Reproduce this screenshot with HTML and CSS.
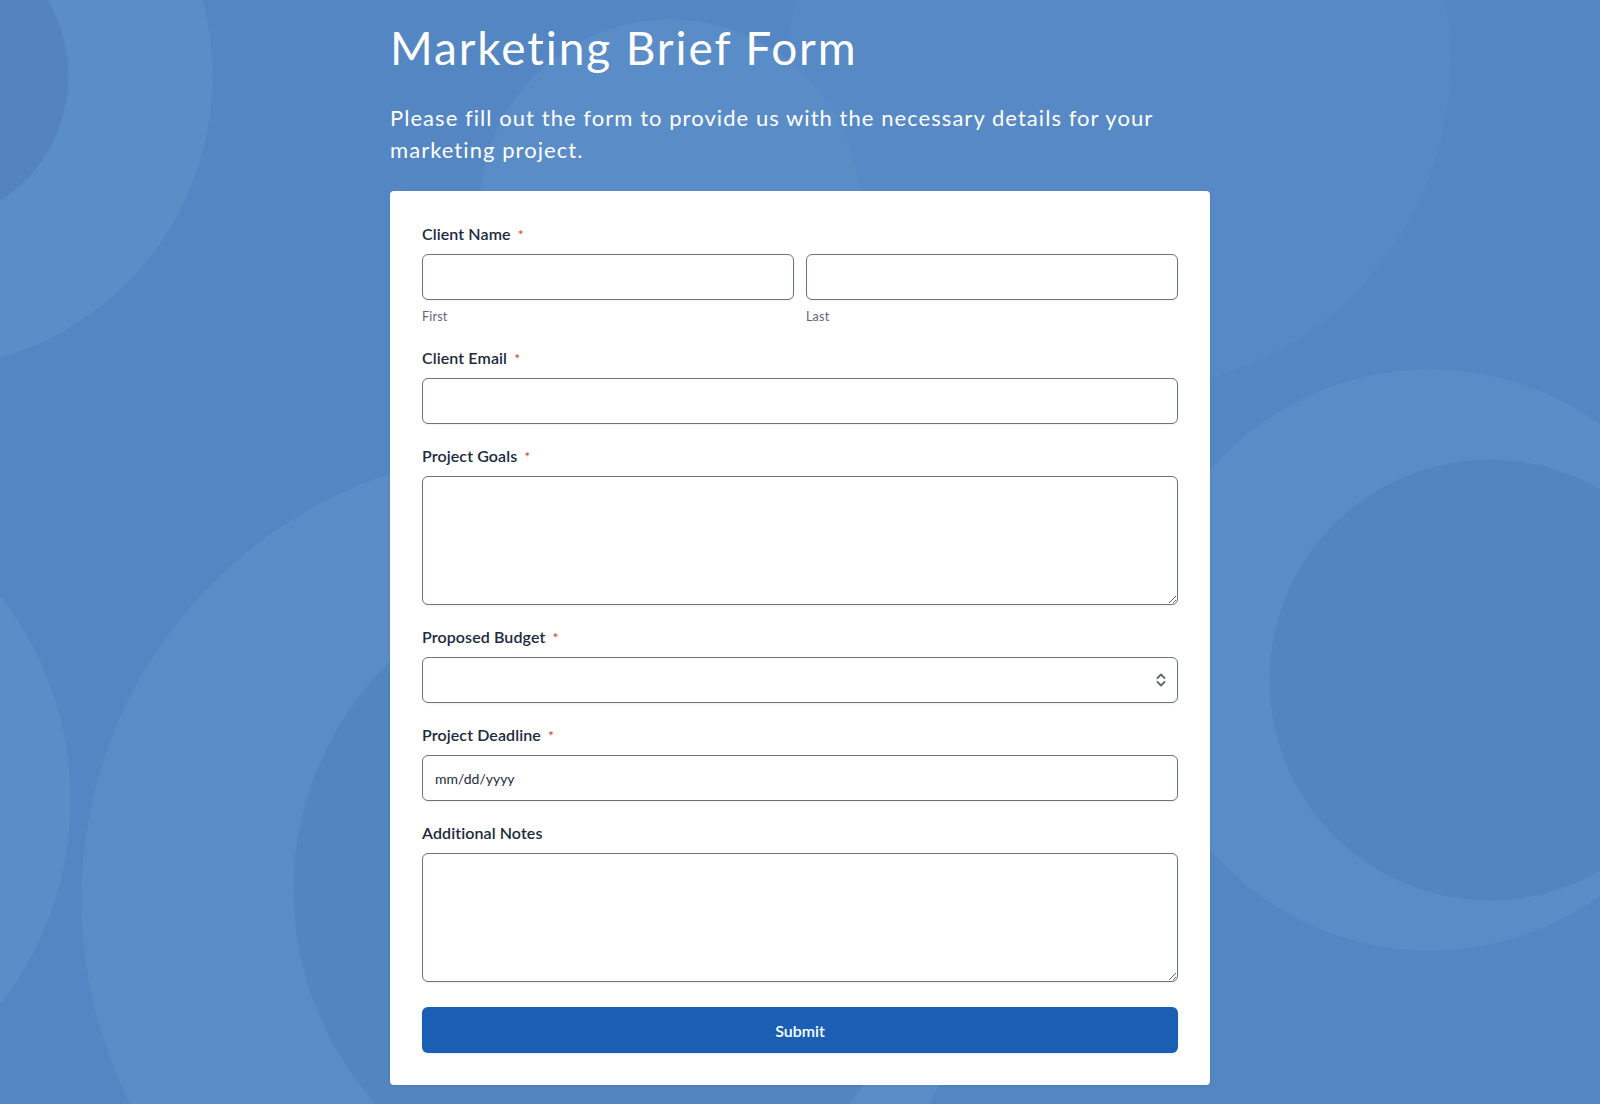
FILE: index.html
```html
<!DOCTYPE html>
<html lang="en">
<head>
<meta charset="utf-8">
<title>Marketing Brief Form</title>
<link rel="stylesheet" href="styles.css">
</head>
<body>
<main class="page">
  <h1 class="title">Marketing Brief Form</h1>
  <p class="intro">Please fill out the form to provide us with the necessary details for your marketing project.</p>
  <form class="card">
    <div class="field">
      <label class="label">Client Name <span class="req">*</span></label>
      <div class="name-row">
        <div class="name-col">
          <input class="input" type="text">
          <span class="sublabel">First</span>
        </div>
        <div class="name-col">
          <input class="input" type="text">
          <span class="sublabel">Last</span>
        </div>
      </div>
    </div>
    <div class="field">
      <label class="label">Client Email <span class="req">*</span></label>
      <input class="input" type="email">
    </div>
    <div class="field">
      <label class="label">Project Goals <span class="req">*</span></label>
      <textarea class="input textarea"></textarea>
    </div>
    <div class="field">
      <label class="label">Proposed Budget <span class="req">*</span></label>
      <div class="select-wrap">
        <select class="input select"><option></option></select>
        <svg class="chev" width="12" height="16" viewBox="0 0 12 16" fill="none" stroke="#5f6673" stroke-width="1.8" stroke-linecap="round" stroke-linejoin="round"><path d="M2.5 6 L6 2.5 L9.5 6"/><path d="M2.5 10 L6 13.5 L9.5 10"/></svg>
      </div>
    </div>
    <div class="field">
      <label class="label">Project Deadline <span class="req">*</span></label>
      <input class="input date" type="text" placeholder="mm/dd/yyyy">
    </div>
    <div class="field">
      <label class="label">Additional Notes</label>
      <textarea class="input textarea"></textarea>
    </div>
    <button class="submit" type="button">Submit</button>
  </form>
</main>
</body>
</html>
```

FILE: styles.css
```css
html, body {
  margin: 0;
  padding: 0;
}
body {
  min-height: 1104px;
  font-family: Lato, "Noto Sans", sans-serif;
  font-variant-ligatures: none;
  background-color: #5386c2;
  background-image:
    radial-gradient(circle at -80px 76px, #5384c0 0 148px, transparent 149px),
    radial-gradient(circle at -80px 76px, #5b8ec9 0 292px, transparent 293px),
    radial-gradient(circle at 612px 890px, #5385c1 0 318px, transparent 319px),
    radial-gradient(circle at 530px 900px, #5a8dc8 0 448px, transparent 449px),
    radial-gradient(circle at -260px 800px, #5b8ec9 0 330px, transparent 331px),
    radial-gradient(circle at 1490px 680px, #5385c1 0 220px, transparent 221px),
    radial-gradient(circle at 1430px 660px, #5a8dc8 0 290px, transparent 291px),
    radial-gradient(circle at 670px 210px, #5a8dc8 0 190px, transparent 191px),
    radial-gradient(circle at 1120px 60px, #5689c5 0 330px, transparent 331px);
  background-repeat: no-repeat;
  color: #1c2a3e;
}
.page {
  width: 820px;
  margin: 0 auto;
  padding-top: 20px;
  padding-bottom: 18px;
}
.title {
  margin: 0;
  font-size: 46px;
  line-height: 56px;
  font-weight: 400;
  letter-spacing: 1.9px;
  color: #ffffff;
}
.intro {
  margin: 26px 0 0;
  font-size: 22px;
  line-height: 32px;
  font-weight: 400;
  letter-spacing: 1.05px;
  color: #ffffff;
}
.card {
  margin-top: 25px;
  background: #ffffff;
  border-radius: 4px;
  padding: 31px 32px 32px;
  box-shadow: 0 1px 3px rgba(0,0,0,0.08);
}
.field {
  display: flex;
  flex-direction: column;
  margin-bottom: 20px;
}
.label {
  display: block;
  height: 24px;
  font-size: 16px;
  line-height: 24px;
  font-weight: 600;
  letter-spacing: 0.1px;
  color: #1c2a3e;
  margin-bottom: 8px;
}
.req {
  color: #d9402b;
  font-size: 14px;
  line-height: 0;
  margin-left: 3px;
  font-weight: 400;
}
.name-row {
  display: flex;
  gap: 12px;
}
.name-col {
  flex: 1;
  display: flex;
  flex-direction: column;
}
.sublabel {
  margin-top: 8px;
  font-size: 12.5px;
  line-height: 18px;
  color: #5f6673;
  letter-spacing: 0.2px;
}
.input {
  box-sizing: border-box;
  width: 100%;
  height: 46px;
  margin: 0;
  border: 1px solid #6b7280;
  border-radius: 6px;
  background: #ffffff;
  font-family: Lato, "Noto Sans", sans-serif;
  font-size: 14px;
  color: #1c2a3e;
  padding: 0 12px;
  box-shadow: 0 1px 2px rgba(0,0,0,0.06);
  outline: none;
}
.textarea {
  height: 129px;
  resize: vertical;
  padding: 10px 12px;
  display: block;
}
.select-wrap {
  position: relative;
}
.select {
  appearance: none;
  -webkit-appearance: none;
}
.chev {
  position: absolute;
  right: 11px;
  top: 15px;
  pointer-events: none;
}
.date::placeholder {
  color: #1c2a3e;
  opacity: 1;
}
.submit {
  display: block;
  width: 100%;
  height: 46px;
  margin-top: 25px;
  border: none;
  border-radius: 6px;
  background: #1a5fb4;
  color: #ffffff;
  font-family: Lato, "Noto Sans", sans-serif;
  font-size: 16px;
  font-weight: 600;
  box-shadow: 0 1px 3px rgba(0,0,0,0.1);
  cursor: pointer;
}
```
